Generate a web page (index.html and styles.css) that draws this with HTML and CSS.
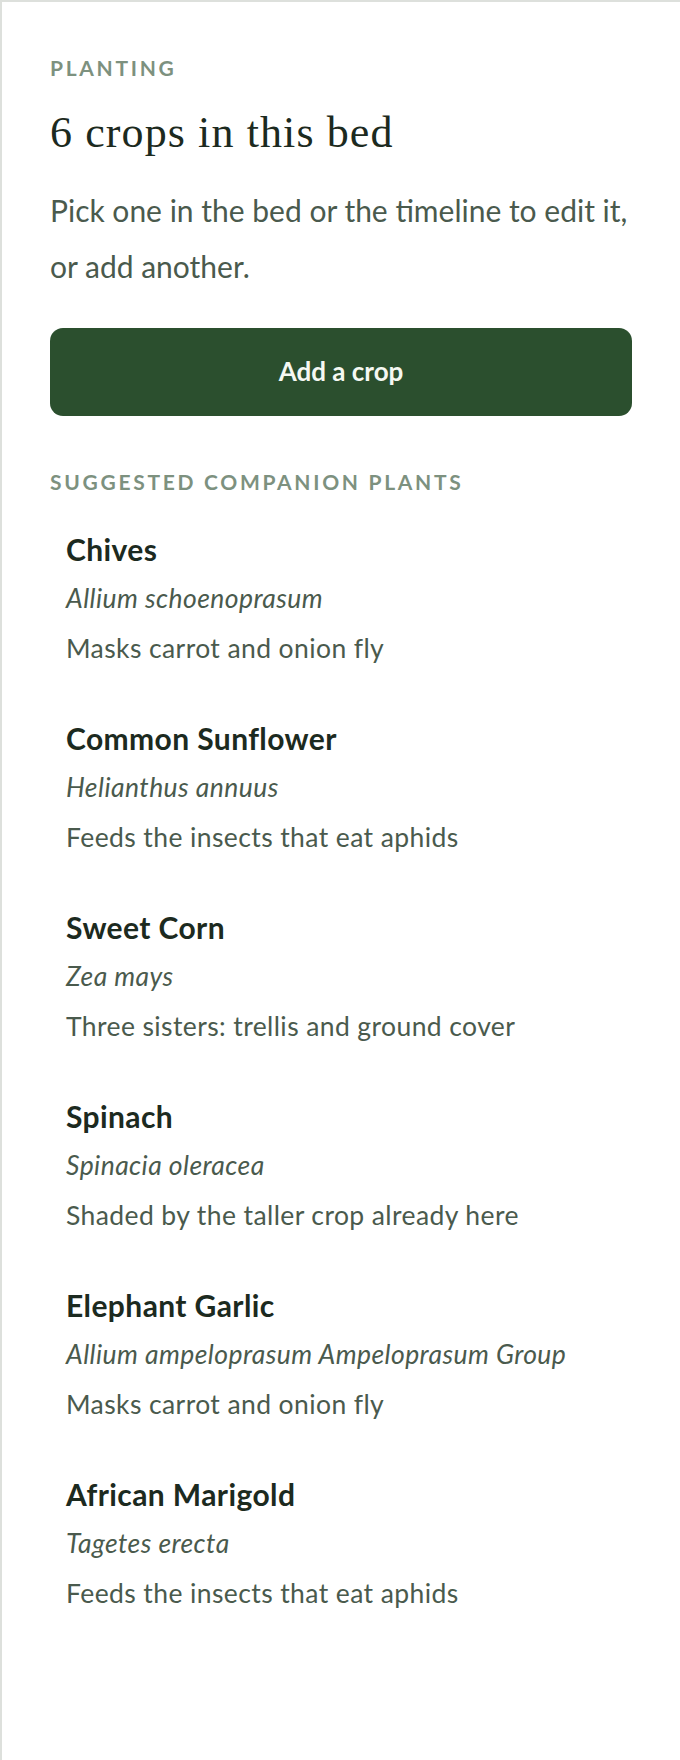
FILE: index.html
```html
<!DOCTYPE html>
<html lang="en">
<head>
<meta charset="utf-8">
<title>Planting</title>
<link rel="stylesheet" href="styles.css">
</head>
<body>
<section class="panel">
  <p class="eyebrow">Planting</p>
  <h1 class="title">6 crops in this bed</h1>
  <p class="lede">Pick one in the bed or the timeline to edit it, or add another.</p>
  <button class="add-btn" type="button">Add a crop</button>
  <p class="eyebrow eyebrow-list">Suggested companion plants</p>
  <ul class="plants">
    <li class="plant">
      <span class="plant-name">Chives</span>
      <span class="plant-latin">Allium schoenoprasum</span>
      <span class="plant-note">Masks carrot and onion fly</span>
    </li>
    <li class="plant">
      <span class="plant-name">Common Sunflower</span>
      <span class="plant-latin">Helianthus annuus</span>
      <span class="plant-note">Feeds the insects that eat aphids</span>
    </li>
    <li class="plant">
      <span class="plant-name">Sweet Corn</span>
      <span class="plant-latin">Zea mays</span>
      <span class="plant-note">Three sisters: trellis and ground cover</span>
    </li>
    <li class="plant">
      <span class="plant-name">Spinach</span>
      <span class="plant-latin">Spinacia oleracea</span>
      <span class="plant-note">Shaded by the taller crop already here</span>
    </li>
    <li class="plant">
      <span class="plant-name">Elephant Garlic</span>
      <span class="plant-latin">Allium ampeloprasum Ampeloprasum Group</span>
      <span class="plant-note">Masks carrot and onion fly</span>
    </li>
    <li class="plant">
      <span class="plant-name">African Marigold</span>
      <span class="plant-latin">Tagetes erecta</span>
      <span class="plant-note">Feeds the insects that eat aphids</span>
    </li>
  </ul>
</section>
</body>
</html>
```

FILE: styles.css
```css
* {
  box-sizing: border-box;
  margin: 0;
  padding: 0;
}

html,
body {
  background: #ffffff;
}

body {
  font-family: Lato, "Noto Sans", sans-serif;
  color: #1f2b22;
}

.panel {
  min-height: 1760px;
  border-top: 2px solid #dde0dc;
  border-left: 2px solid #dde0dc;
  padding: 51px 48px 48px 48px;
}

.eyebrow {
  font-size: 21px;
  line-height: 29.4px;
  font-weight: 700;
  letter-spacing: 2.7px;
  text-transform: uppercase;
  color: #7d917f;
}

.title {
  margin-top: 23px;
  font-family: "Liberation Serif", "Times New Roman", serif;
  font-weight: 400;
  font-size: 44px;
  line-height: 55px;
  letter-spacing: 1.1px;
  color: #1c2a20;
}

.lede {
  margin-top: 22px;
  font-size: 30px;
  line-height: 56px;
  color: #4a5a4d;
}

.add-btn {
  display: flex;
  align-items: center;
  justify-content: center;
  width: 100%;
  height: 88px;
  margin-top: 34px;
  padding-bottom: 3px;
  border: none;
  border-radius: 13px;
  background: #2b4f2e;
  color: #f5f8f2;
  font-family: Lato, "Noto Sans", sans-serif;
  font-size: 26px;
  font-weight: 700;
}

.eyebrow-list {
  margin-top: 51px;
}

.plants {
  list-style: none;
  margin-top: 8px;
}

.plant {
  display: flex;
  flex-direction: column;
  padding: 20px 16px 21px;
}

.plant-name {
  font-size: 30px;
  line-height: 48px;
  font-weight: 700;
  letter-spacing: 0.4px;
  color: #1c2a20;
}

.plant-latin {
  font-size: 26.5px;
  line-height: 50px;
  font-style: italic;
  letter-spacing: 0.45px;
  color: #4a5a4d;
}

.plant-note {
  font-size: 26.5px;
  line-height: 50px;
  letter-spacing: 0.4px;
  color: #4a5a4d;
}
```
